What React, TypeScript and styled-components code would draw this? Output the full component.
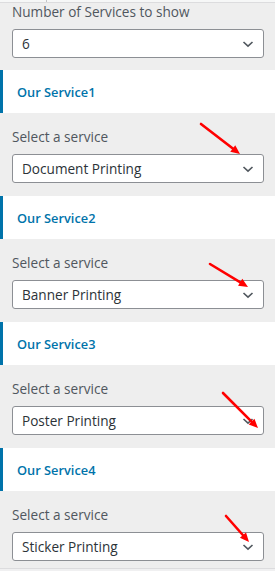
import React from 'react';
import styled, { createGlobalStyle } from 'styled-components';

const GlobalStyle = createGlobalStyle`
  html, body {
    margin: 0;
    padding: 0;
    background: #eeeeee;
  }
  body {
    font-family: "Open Sans", "Noto Sans", sans-serif;
  }
`;

const Panel = styled.div`
  position: relative;
  width: 275px;
  height: 571px;
  overflow: hidden;
  background: #eeeeee;
`;

const TopStrip = styled.div`
  display: flex;
  height: 2px;
  background: #f6f7f7;
  border-bottom: 1px solid #dcdcde;
`;

const TopCell = styled.div`
  width: 46px;
  border-right: 1px solid #c3c4c7;
`;

const Control = styled.div`
  padding: 0 11px 0 12px;
`;

const Label = styled.div<{ $top?: number }>`
  margin-top: ${(p) => p.$top ?? 12}px;
  margin-bottom: 5px;
  font-size: 13.6px;
  line-height: 24px;
  color: #50575e;
  white-space: nowrap;
`;

const SelectBox = styled.div`
  position: relative;
  box-sizing: border-box;
  height: 29px;
  display: flex;
  align-items: center;
  padding: 0 24px 0 9px;
  background: #fff;
  border: 1px solid #8c8f94;
  border-radius: 3px;
  font-size: 13.6px;
  color: #2c3338;
`;

const Chevron = styled.svg`
  position: absolute;
  right: 7px;
  top: 50%;
  margin-top: -8px;
  width: 16px;
  height: 16px;
`;

const SectionHeader = styled.div<{ $gap: number }>`
  box-sizing: border-box;
  height: 43px;
  margin-top: ${(p) => p.$gap}px;
  display: flex;
  align-items: center;
  padding-left: 14px;
  background: #fff;
  border-left: 3px solid #0073aa;
  color: #0073aa;
  font-size: 12.8px;
  font-weight: 600;
`;

const Section = styled.div``;

const BottomLine = styled.div`
  margin-top: 7px;
  border-top: 1px solid #dcdcde;
  height: 10px;
  background: #f0f0f1;
`;

const Overlay = styled.svg`
  position: absolute;
  left: 0;
  top: 0;
  width: 275px;
  height: 571px;
  pointer-events: none;
`;

function Select({ value }: { value: string }) {
  return (
    <SelectBox>
      {value}
      <Chevron viewBox="0 0 16 16">
        <path d="M3.5 6 L8 10.2 L12.5 6" fill="none" stroke="#50575e" strokeWidth="1.6" />
      </Chevron>
    </SelectBox>
  );
}

const services = ['Document Printing', 'Banner Printing', 'Poster Printing', 'Sticker Printing'];

const arrows = [
  { x1: 201, y1: 124, x2: 240, y2: 154 },
  { x1: 210, y1: 264, x2: 248, y2: 287 },
  { x1: 223, y1: 393, x2: 258, y2: 428 },
  { x1: 226, y1: 516, x2: 249, y2: 542 },
];

function Arrow({ x1, y1, x2, y2 }: { x1: number; y1: number; x2: number; y2: number }) {
  const a = Math.atan2(y2 - y1, x2 - x1);
  const len = 10;
  const w = 0.42;
  const p1 = [x2 - len * Math.cos(a - w), y2 - len * Math.sin(a - w)];
  const p2 = [x2 - len * Math.cos(a + w), y2 - len * Math.sin(a + w)];
  const bx = x2 - 7 * Math.cos(a);
  const by = y2 - 7 * Math.sin(a);
  return (
    <g>
      <line x1={x1} y1={y1} x2={bx} y2={by} stroke="#f00" strokeWidth="2.6" strokeLinecap="round" />
      <polygon points={`${x2},${y2} ${p1[0]},${p1[1]} ${p2[0]},${p2[1]}`} fill="#f00" />
    </g>
  );
}

export default function App() {
  return (
    <>
      <GlobalStyle />
      <Panel>
        <TopStrip>
          <TopCell />
        </TopStrip>
        <Control>
          <Label $top={-3}>Number of Services to show</Label>
          <Select value="6" />
        </Control>
        {services.map((s, i) => (
          <Section key={s}>
            <SectionHeader $gap={i === 0 ? 12 : 13}>Our Service{i + 1}</SectionHeader>
            <Control>
              <Label>Select a service</Label>
              <Select value={s} />
            </Control>
          </Section>
        ))}
        <BottomLine />
        <Overlay viewBox="0 0 275 571">
          {arrows.map((a, i) => (
            <Arrow key={i} {...a} />
          ))}
        </Overlay>
      </Panel>
    </>
  );
}
